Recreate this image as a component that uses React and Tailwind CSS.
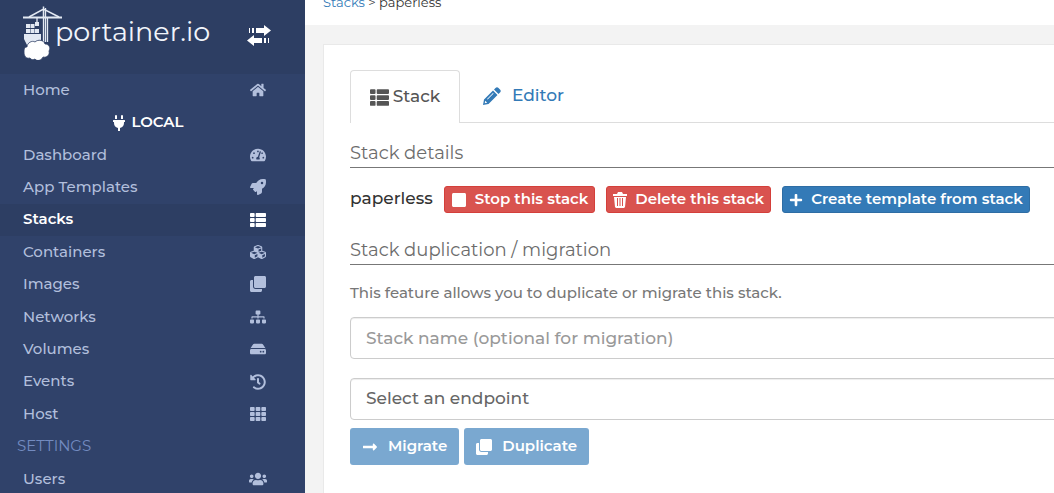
import { useState } from "react";
import {
  FaClone,
  FaCubes,
  FaHdd,
  FaHistory,
  FaHome,
  FaLongArrowAltRight,
  FaPlug,
  FaPlus,
  FaRocket,
  FaSitemap,
  FaStop,
  FaTachometerAlt,
  FaTh,
  FaThList,
  FaUsers,
} from "react-icons/fa";

const menuItems = [
  { label: "Dashboard", icon: FaTachometerAlt },
  { label: "App Templates", icon: FaRocket },
  { label: "Stacks", icon: FaThList, active: true },
  { label: "Containers", icon: FaCubes },
  { label: "Images", icon: FaClone },
  { label: "Networks", icon: FaSitemap },
  { label: "Volumes", icon: FaHdd },
  { label: "Events", icon: FaHistory },
  { label: "Host", icon: FaTh },
];

const CraneLogo = () => (
  <svg viewBox="0 0 40 56" className="h-14 w-10 shrink-0" aria-hidden="true">
    <g fill="none" stroke="#e3e9f3">
      <path d="M0 13.500H39" strokeWidth="2" />
      <path d="M6 13L20.500 5L36 13M20.500 2.500V13" strokeWidth="1.5" />
      <path d="M20.500 13V38M24.500 13V38M22.500 4V38" strokeWidth="1.3" />
      <path d="M14 14V18" strokeWidth="1.3" />
    </g>
    <g fill="#e3e9f3">
      <path d="M12 18h4v4h-4zM3 20h4v4H3zM7.500 20h4v4h-4zM3 25h4v4H3zM7.500 25h4v4h-4zM12 25h4v4h-4z" />
      <path d="M1 30h17v6l-4 1-5 4H4l-3-6z" />
    </g>
    <path
      d="M7 54c-4 1-6-2-6-6s1-5 3-5c0-4 5-7 8-5 3-3 9-2 10 2 4 0 6 4 4 7 1 4-2 7-6 6-1 3-6 5-8 2-2 1-4 1-5-1z"
      fill="#fff"
      stroke="#2d3e63"
      strokeWidth="0.8"
    />
  </svg>
);

const ToggleIcon = () => (
  <svg viewBox="0 0 24 21" className="h-[21px] w-6" fill="currentColor" aria-hidden="true">
    <path d="M2 3h1v5H2zM5 3h2v5H5zM9 3h8V0l7 5.500-7 5.500V8H9z" />
    <path d="M22 13h-1v5h1zM19 13h-2v5h2zM15 13H7v-3l-7 5.500 7 5.500v-3h8z" />
  </svg>
);

const PencilIcon = () => (
  <svg viewBox="0 0 18 18" className="size-[18px]" aria-hidden="true">
    <path
      fill="currentColor"
      fillRule="evenodd"
      d="M12.500 1q1.500-1.500 3 0l1.500 1.500q1.500 1.500 0 3L15.500 7 11 2.500zM10 3.500L14.500 8 5.500 17 0 18l1-5.500zM10 6l-6 6 .6.6 6-6zM2.300 13.800l-.6 2.500 2.500-.6z"
    />
  </svg>
);

const TrashIcon = () => (
  <svg viewBox="0 0 14 16" className="h-4 w-[14px]" aria-hidden="true">
    <path
      fill="currentColor"
      fillRule="evenodd"
      d="M5 0h4l1 2h4v2H0V2h4zM1 5h12l-1 10-1 1H3l-1-1zM4 6v8h1V6zM6.500 6v8h1V6zM9 6v8h1V6z"
    />
  </svg>
);

const SidebarLink = ({ label, icon: Icon, active }) => (
  <li className="flex">
    <a
      href="#"
      className={`flex flex-1 items-center justify-between pr-[37px] pl-[23px] text-[15px] ${
        active
          ? "bg-[#2d3e63] font-semibold text-white"
          : "font-medium text-[#b2bfdc]"
      }`}
    >
      {label}
      <span className="flex w-5 justify-center">
        <Icon className={label === "Users" ? "size-[18px]" : "size-4"} />
      </span>
    </a>
  </li>
);

const Sidebar = () => (
  <nav className="flex w-[305px] shrink-0 flex-col bg-[#30426a]">
    <div className="flex h-[74px] shrink-0 items-start justify-between bg-[#2d3e63] pt-1 pr-[34px] pl-[23px] text-white">
      <a href="#" className="flex">
        <CraneLogo />
        <span className="-ml-2 pt-[10px] text-[27px] leading-9 text-[#f1f5fb]">portainer.io</span>
      </a>
      <button type="button" aria-label="Toggle sidebar" className="mt-[21px]">
        <ToggleIcon />
      </button>
    </div>
    <ul className="grid min-h-[calc(100vh-72px)] auto-rows-fr">
      <SidebarLink label="Home" icon={FaHome} />
      <li className="flex items-center justify-center gap-1 pr-[10px] text-[15px] font-semibold text-white">
        <FaPlug className="size-4" />
        LOCAL
      </li>
      {menuItems.map((item) => (
        <SidebarLink key={item.label} {...item} />
      ))}
      <li className="flex items-center pl-[17px] text-[15px] text-[#738bc0]">SETTINGS</li>
      <SidebarLink label="Users" icon={FaUsers} />
    </ul>
  </nav>
);

const SectionTitle = ({ children }) => (
  <h2 className="border-b border-[#777] pb-0.5 text-lg leading-6 text-[#6c6c6c]">
    {children}
  </h2>
);

const smallButton =
  "flex h-[27px] items-center gap-2 rounded-[3px] border px-1.5 text-[15px] font-semibold text-white";
const mainButton =
  "flex h-[37px] items-center gap-[10px] rounded-[3px] bg-[#7aa8d0] px-3 text-[15px] font-semibold text-white";
const field =
  "block w-full appearance-none rounded border border-[#ccc] bg-white px-[15px] text-[17px] font-medium shadow-[inset_0_1px_1px_rgba(0,0,0,0.075)]";

const App = () => {
  const [stackName, setStackName] = useState("");

  return (
    <div className="flex h-screen overflow-hidden bg-[#f3f3f3] font-['Montserrat','Inter',sans-serif]">
      <Sidebar />
      <main className="min-w-0 flex-1 overflow-hidden">
        <div className="flex h-[25px] items-start overflow-hidden bg-white pl-[18px]">
          <p className="-mt-2 text-[13px] leading-5 text-[#333]">
            <a href="#" className="text-[#337ab7]">
              Stacks
            </a>{" "}
            &gt; paperless
          </p>
        </div>

        <section className="mt-[19px] -mr-6 ml-[18px] min-h-screen border border-[#e9e9e9] bg-white pt-[25px] pl-[26px]">
          <div role="tablist" className="flex border-b border-[#ddd] text-[17px] font-medium">
            <button
              type="button"
              role="tab"
              aria-selected="true"
              className="-mb-px flex h-[53px] w-[110px] items-center justify-center gap-1 rounded-t border border-b-0 border-[#ddd] bg-white text-[#555]"
            >
              <FaThList className="size-[19px]" />
              Stack
            </button>
            <button
              type="button"
              role="tab"
              aria-selected="false"
              className="flex h-[52px] items-center gap-[11px] px-[23px] text-[#337ab7]"
            >
              <PencilIcon />
              Editor
            </button>
          </div>

          <div className="pt-[18px]">
            <SectionTitle>Stack details</SectionTitle>
            <div className="mt-[18px] flex items-start gap-[11px] whitespace-nowrap">
              <span className="text-[17px] leading-6 font-medium text-[#333]">paperless</span>
              <button type="button" className={`${smallButton} border-[#d43f3a] bg-[#d9534f]`}>
                <FaStop className="size-4" />
                Stop this stack
              </button>
              <button type="button" className={`${smallButton} border-[#d43f3a] bg-[#d9534f]`}>
                <TrashIcon />
                Delete this stack
              </button>
              <button type="button" className={`${smallButton} border-[#2e6da4] bg-[#337ab7]`}>
                <FaPlus className="size-[14px]" />
                Create template from stack
              </button>
            </div>
          </div>

          <form className="pt-[25px]" onSubmit={(e) => e.preventDefault()}>
            <SectionTitle>Stack duplication / migration</SectionTitle>
            <p className="mt-[18px] text-[15px] leading-5 font-medium text-[#777]">
              This feature allows you to duplicate or migrate this stack.
            </p>
            <input
              type="text"
              aria-label="Stack name"
              placeholder="Stack name (optional for migration)"
              value={stackName}
              onChange={(e) => setStackName(e.target.value)}
              className={`${field} mt-[14px] h-[42px] text-[#555] placeholder:text-[#999]`}
            />
            <select aria-label="Endpoint" className={`${field} mt-[19px] h-[42px] text-[#666]`}>
              <option>Select an endpoint</option>
            </select>
            <div className="mt-2 flex gap-[5px]">
              <button type="submit" disabled className={mainButton}>
                <FaLongArrowAltRight className="size-4" />
                Migrate
              </button>
              <button type="submit" disabled className={mainButton}>
                <FaClone className="size-4" />
                Duplicate
              </button>
            </div>
          </form>
        </section>
      </main>
    </div>
  );
};

export default App;
